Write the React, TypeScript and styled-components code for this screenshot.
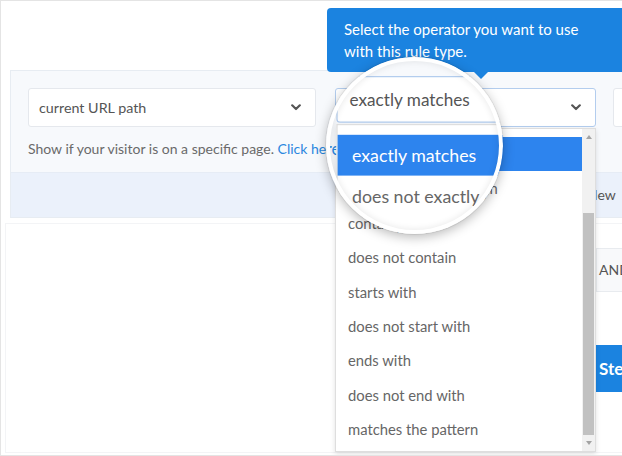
import React from "react";
import styled, { createGlobalStyle } from "styled-components";

const GlobalStyle = createGlobalStyle`
  html, body {
    margin: 0;
    padding: 0;
    background: #fff;
  }
  body {
    font-family: Lato, "Open Sans", "Liberation Sans", sans-serif;
  }
  * {
    box-sizing: border-box;
  }
`;

const Frame = styled.div`
  position: relative;
  width: 622px;
  height: 456px;
  overflow: hidden;
  background: #fff;
`;

const SceneBox = styled.div`
  position: relative;
  width: 622px;
  height: 456px;
  overflow: hidden;
  background: #fff;
  border: 1px solid #e4e4e4;
  border-right: none;
  padding-top: 69px;
`;

const Tooltip = styled.div`
  position: absolute;
  left: 326px;
  top: 7px;
  width: 320px;
  height: 64px;
  padding: 10px 0 0 17px;
  background: #1b83e0;
  border-radius: 4px;
  color: #fff;
  font-size: 15px;
  line-height: 22px;

  &::after {
    content: "";
    position: absolute;
    left: 147px;
    bottom: -7px;
    border-left: 7px solid transparent;
    border-right: 7px solid transparent;
    border-top: 7px solid #1b83e0;
  }
`;

const Panel = styled.section`
  width: 660px;
  margin-left: 9px;
  border: 1px solid #e7ecf2;
  background: #f7f9fc;
`;

const PanelBody = styled.div`
  height: 101px;
  padding: 17px 0 0 17px;
`;

const FieldRow = styled.div`
  display: flex;
  align-items: flex-start;
`;

const SelectWrap = styled.div<{ $width: number; $gap: number }>`
  position: relative;
  flex: none;
  width: ${(p) => p.$width}px;
  margin-left: ${(p) => p.$gap}px;
`;

const SelectBox = styled.div<{ $focused?: boolean }>`
  display: flex;
  align-items: center;
  justify-content: space-between;
  height: 39px;
  padding: 0 14px 0 10px;
  background: #fff;
  border: 1px solid ${(p) => (p.$focused ? "#b3cdee" : "#e5e8ed")};
  border-radius: 3px;
  font-size: 14.3px;
  color: #555;
`;

const Help = styled.p`
  margin: 14px 0 0;
  font-size: 14px;
  line-height: 16px;
  color: #6a6a6a;
  white-space: nowrap;

  a {
    color: #2a87df;
    text-decoration: none;
  }
`;

const Band = styled.div`
  height: 45px;
  padding-left: 576px;
  background: #ebf1fb;
  border-top: 1px solid #e6ecf5;
  font-size: 14px;
  line-height: 44px;
  color: #555;
`;

const LowerCard = styled.div`
  width: 700px;
  height: 230px;
  margin: 5px 0 0 4px;
  padding: 24px 0 0 590px;
  border: 1px solid #f3f4f6;
`;

const AndChip = styled.div`
  width: 60px;
  height: 44px;
  padding-left: 2px;
  background: #f8f9fb;
  border: 1px solid #e8ebef;
  font-size: 14px;
  line-height: 42px;
  color: #555;
`;

const StepButton = styled.div`
  width: 80px;
  height: 47px;
  margin-top: 53px;
  padding-left: 3px;
  background: #1b83e0;
  color: #fff;
  font-size: 17px;
  font-weight: 700;
  line-height: 47px;
`;

const Dropdown = styled.div`
  position: absolute;
  left: 0;
  top: calc(100% + 1px);
  width: 100%;
  height: 324px;
  display: flex;
  background: #fff;
  border: 1px solid #dedede;
  box-shadow: 0 2px 5px rgba(0, 0, 0, 0.12);
`;

const Options = styled.ul`
  flex: 1;
  margin: 0;
  padding: 8px 0 0;
  list-style: none;
`;

const Option = styled.li<{ $active?: boolean }>`
  height: 34.4px;
  padding-left: 12px;
  font-size: 14.8px;
  line-height: 34.4px;
  white-space: nowrap;
  color: ${(p) => (p.$active ? "#fff" : "#666")};
  background: ${(p) => (p.$active ? "#2d84ee" : "transparent")};
`;

const Scrollbar = styled.div`
  flex: none;
  width: 13px;
  display: flex;
  flex-direction: column;
  background: #f1f1f1;
`;

const ScrollArrow = styled.div<{ $down?: boolean }>`
  height: 16px;
  display: flex;
  align-items: center;
  justify-content: center;

  &::before {
    content: "";
    border-left: 3px solid transparent;
    border-right: 3px solid transparent;
    ${(p) =>
      p.$down ? "border-top: 4px solid #a3a3a3;" : "border-bottom: 4px solid #a3a3a3;"}
  }
`;

const Track = styled.div`
  flex: 1;
  display: flex;
  padding: 68px 1px 0;
`;

const Thumb = styled.div`
  flex: 1;
  background: #c1c1c1;
`;

const Lens = styled.div`
  position: absolute;
  left: 326px;
  top: 57px;
  width: 177px;
  height: 177px;
  border-radius: 50%;
  overflow: hidden;
  box-shadow: 0 0 0 1px rgba(0, 0, 0, 0.06), 0 3px 12px rgba(0, 0, 0, 0.28);

  &::after {
    content: "";
    position: absolute;
    inset: 0;
    border-radius: 50%;
    box-shadow: inset 0 0 0 4px #fff, inset 0 0 6px 5px rgba(0, 0, 0, 0.08);
  }
`;

const Magnified = styled.div`
  position: absolute;
  left: -326px;
  top: -57px;
  width: 622px;
  height: 456px;
  transform-origin: 328px 148px;
  transform: scale(1.2);
`;

const Chevron = () => (
  <svg width="10" height="7" viewBox="0 0 10 7">
    <polyline
      points="1.2,1.3 5,5 8.8,1.3"
      fill="none"
      stroke="#555"
      strokeWidth="2.2"
      strokeLinecap="round"
      strokeLinejoin="round"
    />
  </svg>
);

const operators = [
  "exactly matches",
  "does not exactly match",
  "contains",
  "does not contain",
  "starts with",
  "does not start with",
  "ends with",
  "does not end with",
  "matches the pattern",
];

const Scene: React.FC = () => (
  <SceneBox>
    <Panel>
      <PanelBody>
        <FieldRow>
          <SelectWrap $width={288} $gap={0}>
            <SelectBox>
              current URL path
              <Chevron />
            </SelectBox>
          </SelectWrap>
          <SelectWrap $width={261} $gap={19}>
            <SelectBox $focused>
              exactly matches
              <Chevron />
            </SelectBox>
            <Dropdown>
              <Options>
                {operators.map((op, i) => (
                  <Option key={op} $active={i === 0}>
                    {op}
                  </Option>
                ))}
              </Options>
              <Scrollbar>
                <ScrollArrow />
                <Track>
                  <Thumb />
                </Track>
                <ScrollArrow $down />
              </Scrollbar>
            </Dropdown>
          </SelectWrap>
          <SelectWrap $width={120} $gap={17}>
            <SelectBox />
          </SelectWrap>
        </FieldRow>
        <Help>
          Show if your visitor is on a specific page. <a href="#">Click here</a>
        </Help>
      </PanelBody>
      <Band>New</Band>
    </Panel>
    <LowerCard>
      <AndChip>AND</AndChip>
      <StepButton>Step</StepButton>
    </LowerCard>
    <Tooltip>
      Select the operator you want to use
      <br />
      with this rule type.
    </Tooltip>
  </SceneBox>
);

export default function App() {
  return (
    <>
      <GlobalStyle />
      <Frame>
        <Scene />
        <Lens>
          <Magnified>
            <Scene />
          </Magnified>
        </Lens>
      </Frame>
    </>
  );
}
